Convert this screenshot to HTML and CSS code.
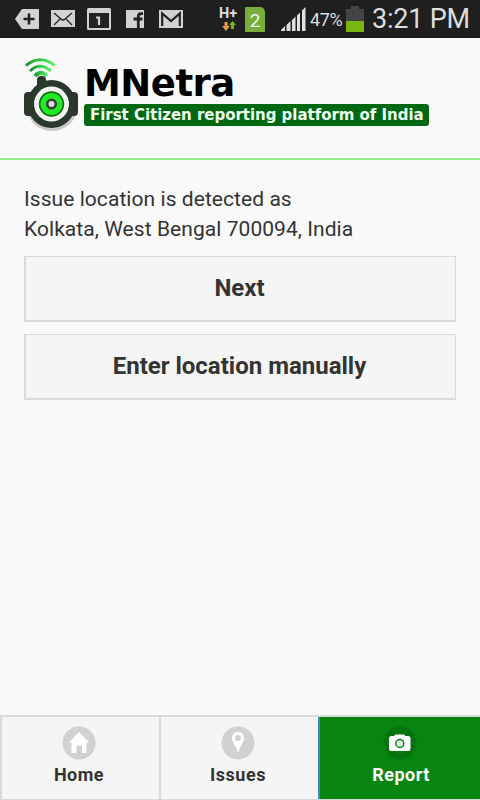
FILE: index.html
```html
<!DOCTYPE html>
<html lang="en">

<head>
  <meta charset="UTF-8">
  <meta name="viewport" content="width=device-width, initial-scale=1.0">
  <title>MNetra</title>
  <link rel="stylesheet" href="styles.css">
</head>

<body>
  <div class="status-bar">
    <div class="notifications">
      <svg width="24" height="20" viewBox="0 0 24 20"><path fill="#d2d2d2" d="M7 0H24V20H7L0 10Z"/><path stroke="#222" stroke-width="2.6" d="M14 4.500V15.500M8.500 10H19.500"/></svg>
      <svg width="24" height="18" viewBox="0 0 24 18"><path fill="#d2d2d2" d="M0 0H24V17H0Z"/><path fill="none" stroke="#222" stroke-width="1.300" d="M3 3L10 9Q12 11 14 9L21 3M3 15L9 9M21 15L15 9"/></svg>
      <svg width="24" height="22" viewBox="0 0 24 22"><rect width="24" height="22" rx="1.500" fill="#d2d2d2"/><path fill="#222" d="M2 5H22V20H2Z"/><path fill="none" stroke="#d2d2d2" stroke-width="2.200" d="M9 9.500H12V17"/></svg>
      <svg class="facebook" width="18" height="18" viewBox="0 0 18 18"><path fill="#d2d2d2" d="M0 0H18V18H0Z"/><path fill="none" stroke="#222" stroke-width="2.800" d="M17 3.600H15Q12.300 3.600 12.300 6.500V18M7.500 9H16.500"/></svg>
      <svg class="gmail" width="24" height="18" viewBox="0 0 24 18"><path fill="#d2d2d2" d="M0 0H24V18H0Z"/><path fill="none" stroke="#222" stroke-width="2.200" d="M3.200 16V3.500L12 11L20.800 3.500V16"/></svg>
    </div>
    <div class="network">
      <span>H+</span>
      <svg width="14" height="10" viewBox="0 0 14 10"><path fill="#e99a45" d="M2.500 1H5.500V5H8L4 10L0 5H2.500Z"/><path fill="#72b80d" d="M9 8H12V4H14L10.500 0L7 4H9Z"/></svg>
    </div>
    <div class="sim">2</div>
    <svg class="signal" width="25" height="24" viewBox="0 0 25 24"><path fill="#e0e0e0" d="M0 23L4 19V24H0ZM5.500 18L9.500 14V24H5.500ZM11 13L14.500 9.500V24H11ZM16 8.500L19 5.500V24H16ZM21 3.500L24.500 0V24H21Z"/></svg>
    <span class="percent">47%</span>
    <svg class="battery" width="18" height="26" viewBox="0 0 18 26"><path fill="#444" d="M0 3H5V0H13V3H18V15H0Z"/><path fill="#79b50c" d="M0 15H18V26H0Z"/></svg>
    <span class="clock">3:21 PM</span>
  </div>

  <header class="header">
    <svg class="logo" width="56" height="76" viewBox="0 0 56 76">
      <defs>
        <linearGradient id="wave" x1="0" x2="1">
          <stop offset="0" stop-color="#17952a"/>
          <stop offset="1" stop-color="#5cf765"/>
        </linearGradient>
      </defs>
      <g fill="none" stroke="url(#wave)" stroke-width="3">
        <path d="M2 8.500Q16 -3 31 8.500"/>
        <path d="M6 14Q16 4.500 27 14"/>
        <path stroke-width="4" d="M11 19Q17 12.500 23 19"/>
      </g>
      <ellipse cx="28" cy="50" rx="25" ry="24" fill="#c8c8c8"/>
      <rect y="35" width="12" height="24" rx="4" fill="#2b382c"/>
      <rect x="43" y="35" width="11" height="24" rx="4" fill="#2b382c"/>
      <rect x="13" y="19" width="9" height="16" rx="4" fill="#2b382c"/>
      <circle cx="27.500" cy="47" r="24" fill="#2b382c"/>
      <circle cx="27.500" cy="47" r="17.500" fill="#f3f3f3"/>
      <circle cx="27.500" cy="47" r="12.700" fill="#106d18"/>
      <circle cx="27.500" cy="47" r="11" fill="#21eb25"/>
      <circle cx="27.500" cy="47" r="5.500" fill="#314132"/>
      <circle cx="27.500" cy="47" r="3" fill="#ddd"/>
    </svg>
    <div class="brand">
      <div class="name">MNetra</div>
      <div class="tagline">First Citizen reporting platform of India</div>
    </div>
  </header>

  <main class="content">
    <p class="location">Issue location is detected as<br>Kolkata, West Bengal 700094, India</p>
    <button class="button">Next</button>
    <button class="button">Enter location manually</button>
  </main>

  <nav class="tabs">
    <a class="tab">
      <svg width="34" height="34" viewBox="0 0 34 34"><circle cx="17" cy="17" r="16.500" fill="#d1d1d1"/><path fill="#fff" d="M17 6L27 16.500H24.500V27H20V19.500H14.500V27H9.500V16.500H7Z"/></svg>
      <span>Home</span>
    </a>
    <a class="tab">
      <svg width="34" height="34" viewBox="0 0 34 34"><circle cx="17" cy="17" r="16.500" fill="#d1d1d1"/><path fill="#fff" fill-rule="evenodd" d="M17 6C13 6 11 9 11 12C11 16 15 20 17 27C19 20 23 16 23 12C23 9 21 6 17 6ZM17 9A3 3 0 1 1 17 15A3 3 0 1 1 17 9Z"/></svg>
      <span>Issues</span>
    </a>
    <a class="tab active">
      <svg width="34" height="34" viewBox="0 0 34 34"><circle cx="17" cy="17" r="16.500" fill="#07740f"/><path fill="#fff" d="M8.500 10H11L12.500 8.500H21L22.500 10H25Q27.500 10 27.500 12.500V22.500Q27.500 25 25 25H8.500Q6 25 6 22.500V12.500Q6 10 8.500 10Z"/><circle cx="16.800" cy="17.500" r="4" fill="#e4f4e4" stroke="#087e11" stroke-width="1.500"/></svg>
      <span>Report</span>
    </a>
  </nav>
</body>

</html>
```
FILE: styles.css
```css
* {
  box-sizing: border-box;
}

body {
  display: flex;
  flex-direction: column;
  height: 100vh;
  margin: 0;
  background-color: #f9f9f9;
  color: #333;
  font-family: Roboto, sans-serif;
}

svg {
  display: block;
  flex-shrink: 0;
}

.status-bar {
  display: flex;
  align-items: center;
  height: 38px;
  padding-left: 15px;
  background-color: #1f1f1f;
  color: #dedede;
  white-space: nowrap;
}

.notifications {
  display: flex;
  align-items: center;
  gap: 12px;
  width: 204px;
}

.facebook,
.gmail {
  margin-left: 3px;
}

.network {
  width: 18px;
  padding-bottom: 2px;
  font-size: 14.5px;
  font-weight: bold;
  line-height: 15px;
}

.network svg {
  margin-left: 3px;
}

.sim {
  width: 20px;
  height: 25px;
  margin-left: 8px;
  background-color: #77ae3c;
  border-radius: 1px 5px 1px 1px;
  color: #f0f5e9;
  font-size: 19px;
  line-height: 27px;
  text-align: center;
}

.signal {
  margin-left: 16px;
}

.percent {
  width: 33px;
  margin-left: 4px;
  font-size: 18px;
  letter-spacing: -0.4px;
}

.battery {
  margin-left: 3px;
}

.clock {
  margin-left: 8px;
  font-size: 27px;
  letter-spacing: -0.2px;
}

.header {
  display: flex;
  height: 122px;
  padding: 19px 0 0 24px;
  border-bottom: 2px solid #95ea8b;
}

.brand {
  padding: 4px 0 0 4px;
  font-family: "DejaVu Sans", sans-serif;
  font-weight: bold;
  white-space: nowrap;
}

.name {
  height: 43px;
  color: #000;
  font-size: 37px;
  line-height: 45px;
  letter-spacing: -0.5px;
}

.tagline {
  width: 345px;
  height: 22px;
  padding-left: 6px;
  background-color: #006812;
  border-radius: 3px;
  color: #effff0;
  font-size: 15px;
  line-height: 22px;
  letter-spacing: -0.03px;
}

.content {
  flex: 1;
  padding: 24px;
}

.location {
  margin: 0 0 12px;
  font-size: 21px;
  line-height: 30px;
  letter-spacing: 0.06px;
}

.button {
  display: block;
  width: 100%;
  height: 66px;
  margin-bottom: 12px;
  padding: 0 2px 2px 0;
  background-color: #f5f5f5;
  border: solid #dadada;
  border-width: 1px 1px 2px 2px;
  color: #333;
  font-family: inherit;
  font-size: 24px;
  font-weight: bold;
}

.tabs {
  display: grid;
  grid-template-columns: 159px 159px 162px;
  height: 85px;
  border-top: 2px solid #dadada;
  border-bottom: 1px solid #dadada;
}

.tab {
  display: flex;
  flex-direction: column;
  align-items: center;
  padding: 9px 3px 0 0;
  background-color: #f5f5f5;
  border-left: 2px solid #dadada;
  font-size: 18px;
  font-weight: bold;
  line-height: 30px;
  letter-spacing: 0.5px;
}

.tab.active {
  padding-right: 0;
  background-color: #088511;
  border-left-color: #4486c4;
  color: #fff;
}

.tab.active span {
  padding-left: 2px;
}
```
